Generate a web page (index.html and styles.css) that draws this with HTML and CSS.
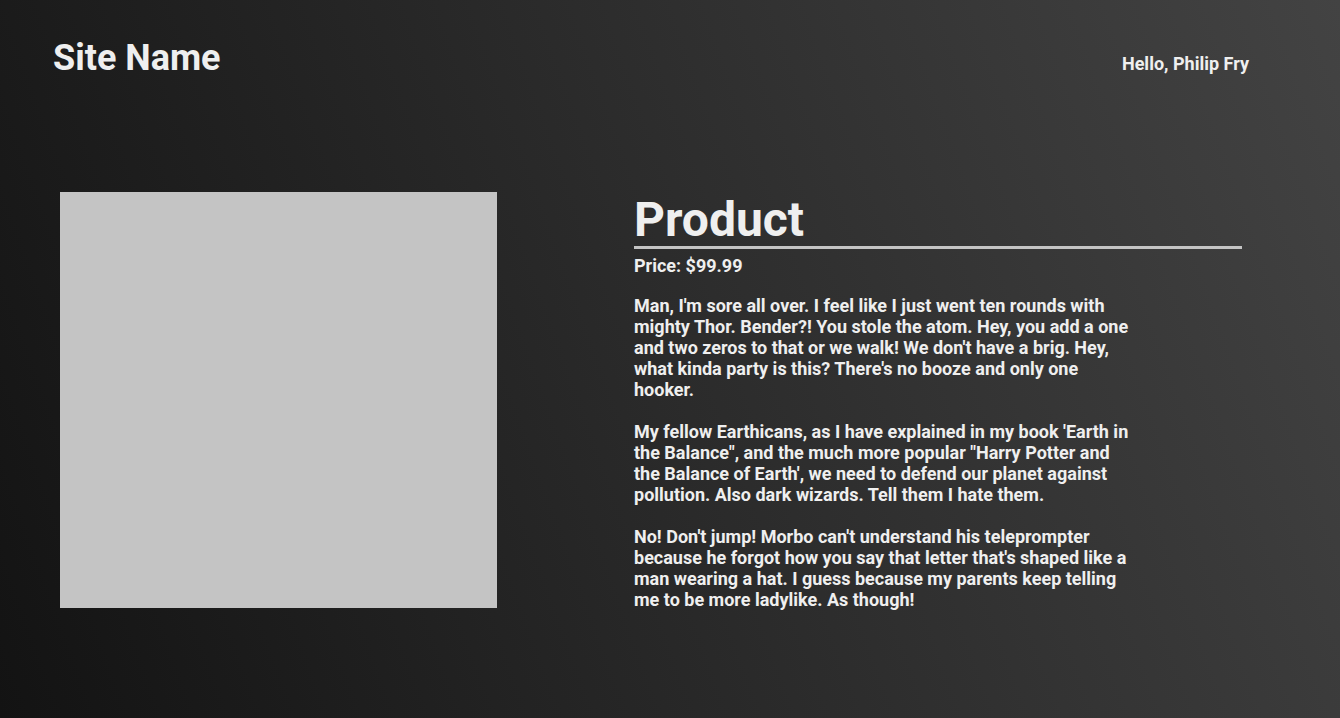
FILE: index.html
```html
<!DOCTYPE html>
<html lang="en">
<head>
<meta charset="utf-8">
<title>Product</title>
<link rel="stylesheet" href="styles.css">
</head>
<body>
<div class="page">
  <header class="site-header">
    <h1 class="site-name">Site Name</h1>
    <div class="greeting">Hello, Philip Fry</div>
  </header>
  <main class="product">
    <div class="product-image"></div>
    <section class="product-info">
      <h2 class="product-title">Product</h2>
      <div class="product-price">Price: $99.99</div>
      <p class="product-text">Man, I'm sore all over. I feel like I just went ten rounds with mighty Thor. Bender?! You stole the atom. Hey, you add a one and two zeros to that or we walk! We don't have a brig. Hey, what kinda party is this? There's no booze and only one hooker.</p>
      <p class="product-text">My fellow Earthicans, as I have explained in my book 'Earth in the Balance", and the much more popular "Harry Potter and the Balance of Earth', we need to defend our planet against pollution. Also dark wizards. Tell them I hate them.</p>
      <p class="product-text">No! Don't jump! Morbo can't understand his teleprompter because he forgot how you say that letter that's shaped like a man wearing a hat. I guess because my parents keep telling me to be more ladylike. As though!</p>
    </section>
  </main>
</div>
</body>
</html>
```

FILE: styles.css
```css
html, body {
  margin: 0;
  padding: 0;
}

body {
  font-family: Roboto, "Liberation Sans", Arial, sans-serif;
  color: #efefef;
  background: linear-gradient(70deg, #131313 0%, #434343 100%);
  min-height: 100vh;
  height: 718px;
  overflow: hidden;
}

.page {
  display: flex;
  flex-direction: column;
}

.site-header {
  display: flex;
  justify-content: space-between;
  align-items: flex-start;
  padding: 37px 91px 0 53px;
}

.site-name {
  margin: 0;
  font-size: 36px;
  line-height: 42px;
  font-weight: 700;
}

.greeting {
  margin-top: 16px;
  font-size: 18px;
  line-height: 21px;
  font-weight: 700;
}

.product {
  display: flex;
  align-items: flex-start;
  gap: 137px;
  padding: 113px 0 0 60px;
}

.product-image {
  flex: none;
  width: 437px;
  height: 416px;
  background: #c4c4c4;
}

.product-info {
  flex: none;
  width: 608px;
  padding-top: 2px;
}

.product-title {
  margin: 0;
  font-size: 48px;
  line-height: 52px;
  font-weight: 700;
  border-bottom: 3px solid #c4c4c4;
}

.product-price {
  margin: 6px 0 19px;
  font-size: 18px;
  line-height: 21px;
  font-weight: 700;
}

.product-text {
  margin: 0 0 21px;
  width: 500px;
  font-size: 18px;
  line-height: 21px;
  font-weight: 700;
}
```
